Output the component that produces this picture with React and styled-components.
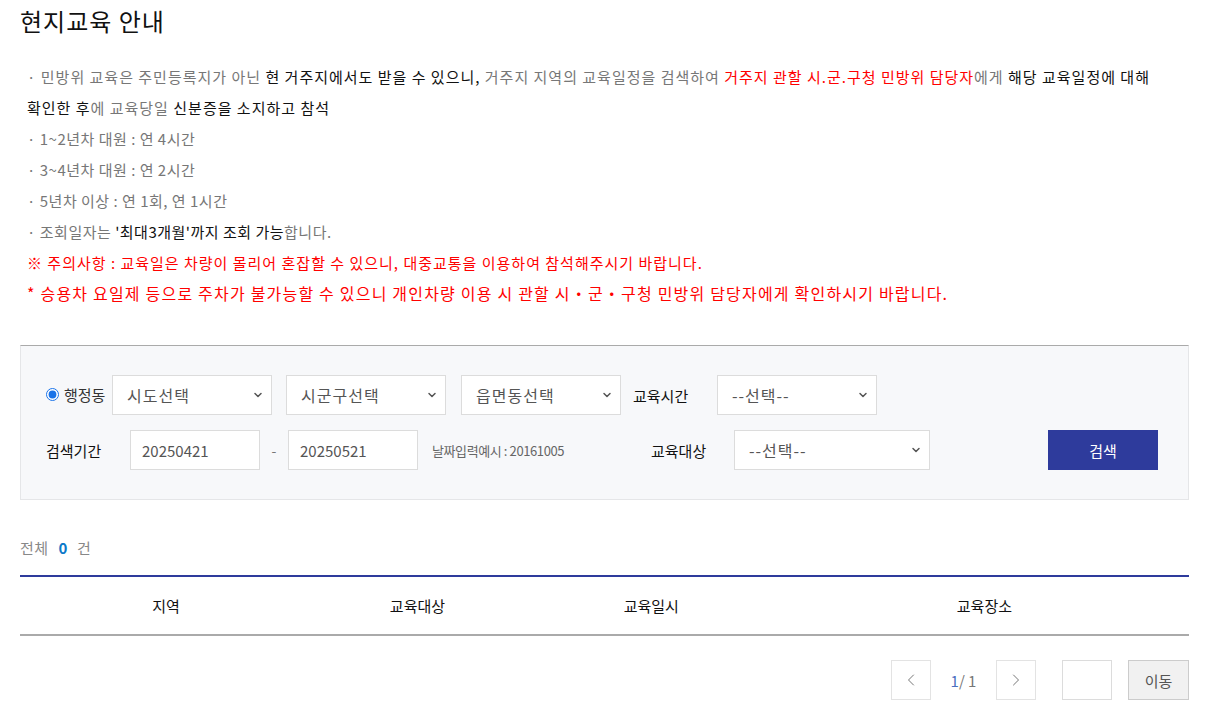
import styled, { createGlobalStyle } from 'styled-components';
import { ChevronDown, ChevronLeft, ChevronRight } from 'lucide-react';

const GlobalStyle = createGlobalStyle`
  * { box-sizing: border-box; }
  body {
    margin: 0;
    background: #fff;
    font-family: "Noto Sans CJK KR", "Noto Sans", sans-serif;
    font-kerning: none;
    font-feature-settings: "kern" 0;
    color: #111;
  }
  input, select, button {
    font-kerning: none;
    font-feature-settings: "kern" 0;
  }
`;

const Page = styled.div`
  padding: 0 42px 0 20px;
`;

const Title = styled.h2`
  margin: 4px 0 0;
  font-size: 24px;
  line-height: 34px;
  font-weight: 400;
  letter-spacing: 1px;
  color: #111;
`;

const Notice = styled.div`
  margin-top: 23px;
  padding-left: 7px;
  font-size: 15px;
  line-height: 31px;
  color: #777;
`;

const Line = styled.div`
  color: ${(p) => (p.$red ? '#ff0000' : '#777')};
  font-size: ${(p) => (p.$big ? '16px' : '15px')};
  letter-spacing: ${(p) => (p.$tight ? '0.5px' : p.$big ? '1.2px' : '1px')};
`;

const Strong = styled.span`
  color: #111;
`;

const Red = styled.span`
  color: #ff0000;
`;

const SearchBox = styled.div`
  margin-top: 36px;
  background: #f7f8fa;
  border: 1px solid #e5e6e8;
  border-top: 1px solid #aaa;
  padding: 29px 30px 29px 25px;
  display: flex;
  flex-direction: column;
  gap: 15px;
`;

const Row = styled.div`
  display: flex;
  align-items: center;
  height: 40px;
`;

const RadioLabel = styled.label`
  display: flex;
  align-items: center;
  gap: 5px;
  font-size: 15px;
  color: #333;
  width: 66px;
  margin-top: -2px;
  flex-shrink: 0;
  input {
    margin: 0;
    width: 13px;
    height: 13px;
    accent-color: #1a73e8;
  }
`;

const FieldLabel = styled.span`
  font-size: 15px;
  color: #111;
  width: ${(p) => p.$w || 'auto'};
  margin-left: ${(p) => p.$ml || '0'};
  flex-shrink: 0;
`;

const SelectWrap = styled.div`
  position: relative;
  width: ${(p) => p.$w};
  height: 40px;
  margin-left: ${(p) => p.$ml || '0'};
  flex-shrink: 0;
  svg {
    position: absolute;
    right: 8px;
    top: 14px;
    pointer-events: none;
    color: #555;
  }
`;

const Select = styled.select`
  appearance: none;
  width: 100%;
  height: 100%;
  border: 1px solid #dcdcdc;
  background: #fff;
  padding: 0 14px;
  font-family: inherit;
  font-size: 16px;
  color: #555;
  letter-spacing: 1px;
  outline: none;
`;

const DateInput = styled.input`
  width: 130px;
  height: 40px;
  border: 1px solid #dcdcdc;
  background: #fff;
  padding: 0 11px;
  font-family: inherit;
  font-size: 15px;
  color: #555;
  outline: none;
  flex-shrink: 0;
`;

const Dash = styled.span`
  width: 28px;
  text-align: center;
  color: #777;
  font-size: 14px;
`;

const Hint = styled.span`
  width: 233px;
  padding-left: 14px;
  flex-shrink: 0;
  font-size: 13px;
  color: #666;
  letter-spacing: -0.4px;
`;

const SearchButton = styled.button`
  margin-left: auto;
  width: 110px;
  height: 40px;
  border: 0;
  background: #2e3b9c;
  color: #fff;
  font-family: inherit;
  font-size: 15px;
  cursor: pointer;
`;

const Count = styled.div`
  margin-top: 38px;
  font-size: 15px;
  line-height: 20px;
  color: #888;
  letter-spacing: 0.5px;
  b {
    color: #0b78c9;
    font-weight: 700;
    margin: 0 9px 0 10px;
  }
`;

const Table = styled.table`
  margin-top: 17px;
  width: 100%;
  border-collapse: collapse;
  border-top: 2px solid #2e3b9c;
  border-bottom: 2px solid #aaa;
  th {
    height: 59px;
    font-size: 15px;
    font-weight: 400;
    color: #111;
    text-align: center;
  }
`;

const Paging = styled.div`
  margin-top: 24px;
  display: flex;
  justify-content: flex-end;
  align-items: center;
`;

const PageArrow = styled.button`
  width: 40px;
  height: 40px;
  border: 1px solid #e3e3e3;
  background: #fff;
  display: flex;
  align-items: center;
  justify-content: center;
  color: #777;
  padding: 0;
`;

const PageInfo = styled.span`
  width: 65px;
  text-align: center;
  font-size: 15px;
  color: #777;
  em {
    font-style: normal;
    color: #4a6fbf;
  }
`;

const PageInput = styled.input`
  margin-left: 26px;
  width: 50px;
  height: 40px;
  border: 1px solid #dcdcdc;
  outline: none;
`;

const MoveButton = styled.button`
  margin-left: 16px;
  width: 61px;
  height: 40px;
  border: 1px solid #ccc;
  background: #f1f1f1;
  color: #555;
  font-family: inherit;
  font-size: 15px;
`;

function Dropdown({ w, ml, children }) {
  return (
    <SelectWrap $w={w} $ml={ml}>
      <Select defaultValue="">{children}</Select>
      <ChevronDown size={12} strokeWidth={3} />
    </SelectWrap>
  );
}

export default function App() {
  return (
    <>
      <GlobalStyle />
      <Page>
        <Title>현지교육 안내</Title>
        <Notice>
          <Line>
            · 민방위 교육은 주민등록지가 아닌 <Strong>현 거주지에서도 받을 수 있으니,</Strong> 거주지 지역의 교육일정을 검색하여{' '}
            <Red>거주지 관할 시.군.구청 민방위 담당자</Red>에게 <Strong>해당 교육일정에 대해</Strong>
            <br />
            <Strong>확인한 후</Strong>에 교육당일 <Strong>신분증을 소지하고 참석</Strong>
          </Line>
          <Line $tight>· 1~2년차 대원 : 연 4시간</Line>
          <Line $tight>· 3~4년차 대원 : 연 2시간</Line>
          <Line $tight>· 5년차 이상 : 연 1회, 연 1시간</Line>
          <Line $tight>
            · 조회일자는 <Strong>'최대3개월'까지 조회 가능</Strong>합니다.
          </Line>
          <Line $red>※ 주의사항 : 교육일은 차량이 몰리어 혼잡할 수 있으니, 대중교통을 이용하여 참석해주시기 바랍니다.</Line>
          <Line $red $big>* 승용차 요일제 등으로 주차가 불가능할 수 있으니 개인차량 이용 시 관할 시・군・구청 민방위 담당자에게 확인하시기 바랍니다.</Line>
        </Notice>

        <SearchBox>
          <Row>
            <RadioLabel>
              <input type="radio" defaultChecked name="area" />
              행정동
            </RadioLabel>
            <Dropdown w="160px">
              <option value="">시도선택</option>
            </Dropdown>
            <Dropdown w="160px" ml="14px">
              <option value="">시군구선택</option>
            </Dropdown>
            <Dropdown w="160px" ml="15px">
              <option value="">읍면동선택</option>
            </Dropdown>
            <FieldLabel $ml="12px" $w="84px">교육시간</FieldLabel>
            <Dropdown w="160px">
              <option value="">--선택--</option>
            </Dropdown>
          </Row>
          <Row>
            <FieldLabel $w="84px">검색기간</FieldLabel>
            <DateInput defaultValue="20250421" />
            <Dash>-</Dash>
            <DateInput defaultValue="20250521" />
            <Hint>날짜입력예시 : 20161005</Hint>
            <FieldLabel $w="83px">교육대상</FieldLabel>
            <Dropdown w="196px">
              <option value="">--선택--</option>
            </Dropdown>
            <SearchButton>검색</SearchButton>
          </Row>
        </SearchBox>

        <Count>
          전체<b>0</b>건
        </Count>

        <Table>
          <colgroup>
            <col style={{ width: '25%' }} />
            <col style={{ width: '18%' }} />
            <col style={{ width: '22%' }} />
            <col style={{ width: '35%' }} />
          </colgroup>
          <thead>
            <tr>
              <th>지역</th>
              <th>교육대상</th>
              <th>교육일시</th>
              <th>교육장소</th>
            </tr>
          </thead>
        </Table>

        <Paging>
          <PageArrow>
            <ChevronLeft size={20} strokeWidth={1.2} />
          </PageArrow>
          <PageInfo>
            <em>1</em>/ 1
          </PageInfo>
          <PageArrow>
            <ChevronRight size={20} strokeWidth={1.2} />
          </PageArrow>
          <PageInput />
          <MoveButton>이동</MoveButton>
        </Paging>
      </Page>
    </>
  );
}
